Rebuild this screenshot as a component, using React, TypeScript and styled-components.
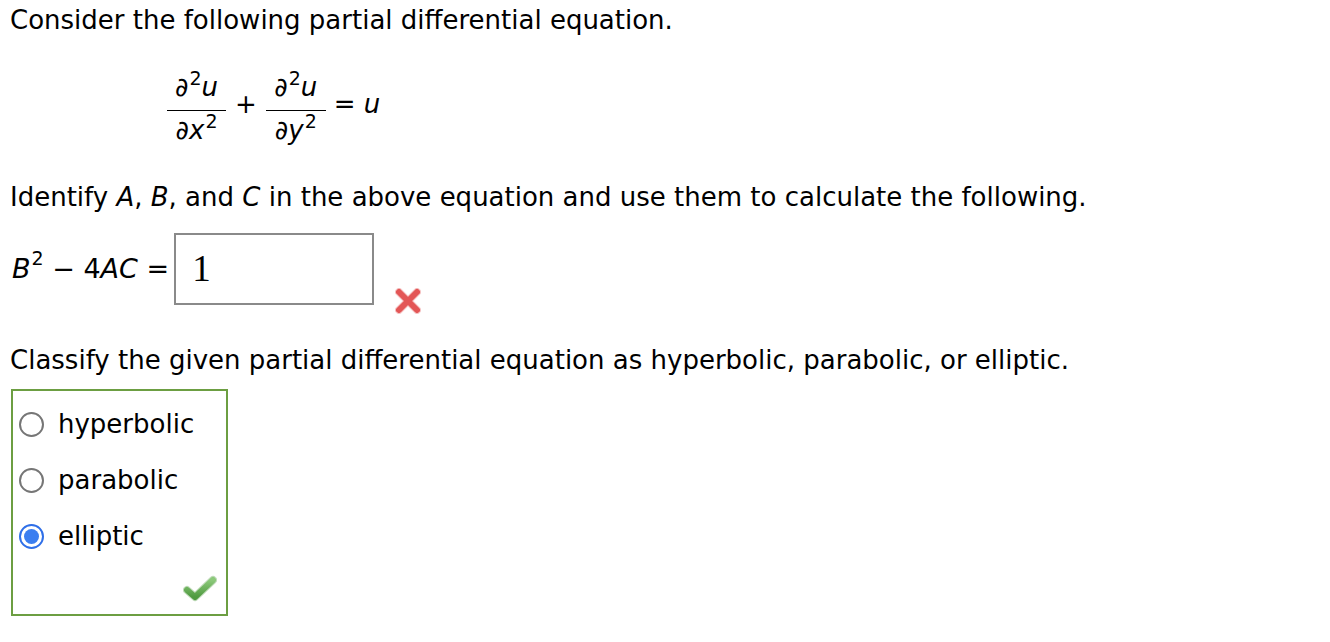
import React from "react";
import styled, { createGlobalStyle } from "styled-components";

const Global = createGlobalStyle`
  html, body { margin: 0; padding: 0; background: #fff; }
  body { font-family: "DejaVu Sans", Verdana, sans-serif; color: #000; }
`;

const Page = styled.div`
  padding: 2px 10px 0 10px;
  font-size: 26px;
  line-height: 36px;
`;

const Para = styled.p<{ $top: number }>`
  margin: ${(p) => p.$top}px 0 0 0;
  font-size: 26px;
  line-height: 36px;
`;

const Equation = styled.div`
  display: flex;
  align-items: center;
  margin: 34px 0 0 157px;
  font-size: 26px;
`;

const Fraction = styled.span<{ $w: number }>`
  display: inline-flex;
  flex-direction: column;
  align-items: center;
  width: ${(p) => p.$w}px;
`;

const Numerator = styled.span`
  line-height: 30px;
  padding-bottom: 6px;
  white-space: nowrap;
`;

const Denominator = styled.span`
  line-height: 30px;
  padding-top: 4px;
  white-space: nowrap;
`;

const Bar = styled.span`
  display: block;
  align-self: stretch;
  height: 0;
  border-top: 1.6px solid #000;
`;

const Op = styled.span<{ $ml: number; $mr: number }>`
  margin: 0 ${(p) => p.$mr}px 0 ${(p) => p.$ml}px;
  line-height: 32px;
  padding-bottom: 12px;
`;

const Var = styled.i`
  font-style: italic;
`;

const Sup = styled.sup`
  font-size: 19px;
  vertical-align: 0;
  position: relative;
  top: -11px;
  margin-left: 1px;
`;

const AnswerRow = styled.div`
  display: flex;
  align-items: flex-start;
  margin-top: 18px;
`;

const MathLabel = styled.span`
  display: flex;
  align-items: center;
  height: 72px;
  margin-left: 2px;
  font-size: 27px;
  white-space: pre;
`;

const AnswerBox = styled.div`
  box-sizing: border-box;
  width: 200px;
  height: 72px;
  margin-left: 5px;
  border: 2px solid #8a8a8a;
  padding: 0 0 0 16px;
  display: flex;
  align-items: center;
  font-family: "Liberation Serif", "Times New Roman", serif;
  font-size: 37px;
`;

const Mark = styled.span`
  display: block;
  margin: 53px 0 0 19px;
  width: 30px;
  height: 30px;
`;

const ChoiceBox = styled.div`
  box-sizing: border-box;
  width: 217px;
  height: 227px;
  margin: 11px 0 0 1px;
  border: 2px solid #6c9e42;
  padding: 5px 0 0 0;
  display: flex;
  flex-direction: column;
`;

const Choice = styled.label`
  display: flex;
  align-items: center;
  height: 56px;
  padding-left: 6px;
  font-size: 26px;
`;

const Radio = styled.span<{ $on: boolean }>`
  box-sizing: border-box;
  width: 25px;
  height: 25px;
  border-radius: 50%;
  border: 2px solid ${(p) => (p.$on ? "#2f6fe8" : "#767676")};
  display: flex;
  align-items: center;
  justify-content: center;
  margin-right: 14px;
  &::after {
    content: "";
    display: ${(p) => (p.$on ? "block" : "none")};
    width: 15px;
    height: 15px;
    border-radius: 50%;
    background: #3b7ef0;
  }
`;

const CheckWrap = styled.div`
  display: flex;
  justify-content: flex-end;
  margin-top: 11px;
  padding-right: 9px;
`;

const XMark = () => (
  <svg width="30" height="30" viewBox="0 0 30 30">
    <g stroke="#e86a6a" strokeWidth="8" strokeLinecap="round" opacity="0.35">
      <line x1="6" y1="6" x2="24" y2="24" />
      <line x1="24" y1="6" x2="6" y2="24" />
    </g>
    <g stroke="#e35656" strokeWidth="6" strokeLinecap="round">
      <line x1="6" y1="6" x2="24" y2="24" />
      <line x1="24" y1="6" x2="6" y2="24" />
    </g>
  </svg>
);

const CheckMark = () => (
  <svg width="34" height="28" viewBox="0 0 34 28">
    <defs>
      <linearGradient id="chk" x1="0" y1="0" x2="0" y2="1">
        <stop offset="0" stopColor="#8cc97a" />
        <stop offset="1" stopColor="#4f9a40" />
      </linearGradient>
    </defs>
    <path
      d="M4 15 L12 22 L30 5"
      fill="none"
      stroke="#4f9a40"
      strokeOpacity="0.35"
      strokeWidth="8"
      strokeLinecap="round"
      strokeLinejoin="round"
    />
    <path
      d="M4 15 L12 22 L30 5"
      fill="none"
      stroke="url(#chk)"
      strokeWidth="6"
      strokeLinecap="round"
      strokeLinejoin="round"
    />
  </svg>
);

export default function App() {
  const options = [
    { label: "hyperbolic", on: false },
    { label: "parabolic", on: false },
    { label: "elliptic", on: true },
  ];
  return (
    <>
      <Global />
      <Page>
        <Para $top={0}>Consider the following partial differential equation.</Para>
        <Equation>
          <Fraction $w={59}>
            <Numerator>
              ∂<Sup>2</Sup>
              <Var>u</Var>
            </Numerator>
            <Bar />
            <Denominator>
              ∂<Var>x</Var>
              <Sup>2</Sup>
            </Denominator>
          </Fraction>
          <Op $ml={9} $mr={9}>+</Op>
          <Fraction $w={60}>
            <Numerator>
              ∂<Sup>2</Sup>
              <Var>u</Var>
            </Numerator>
            <Bar />
            <Denominator>
              ∂<Var>y</Var>
              <Sup>2</Sup>
            </Denominator>
          </Fraction>
          <Op $ml={8} $mr={0}>
            = <Var>u</Var>
          </Op>
        </Equation>
        <Para $top={32}>
          Identify <Var>A</Var>, <Var>B</Var>, and <Var>C</Var> in the above equation and use them to calculate the following.
        </Para>
        <AnswerRow>
          <MathLabel>
            <Var>B</Var>
            <Sup>2</Sup>
            {" − 4"}
            <Var>AC</Var>
            {" ="}
          </MathLabel>
          <AnswerBox>1</AnswerBox>
          <Mark>
            <XMark />
          </Mark>
        </AnswerRow>
        <Para $top={26}>
          Classify the given partial differential equation as hyperbolic, parabolic, or elliptic.
        </Para>
        <ChoiceBox>
          {options.map((o) => (
            <Choice key={o.label}>
              <Radio $on={o.on} />
              {o.label}
            </Choice>
          ))}
          <CheckWrap>
            <CheckMark />
          </CheckWrap>
        </ChoiceBox>
      </Page>
    </>
  );
}
